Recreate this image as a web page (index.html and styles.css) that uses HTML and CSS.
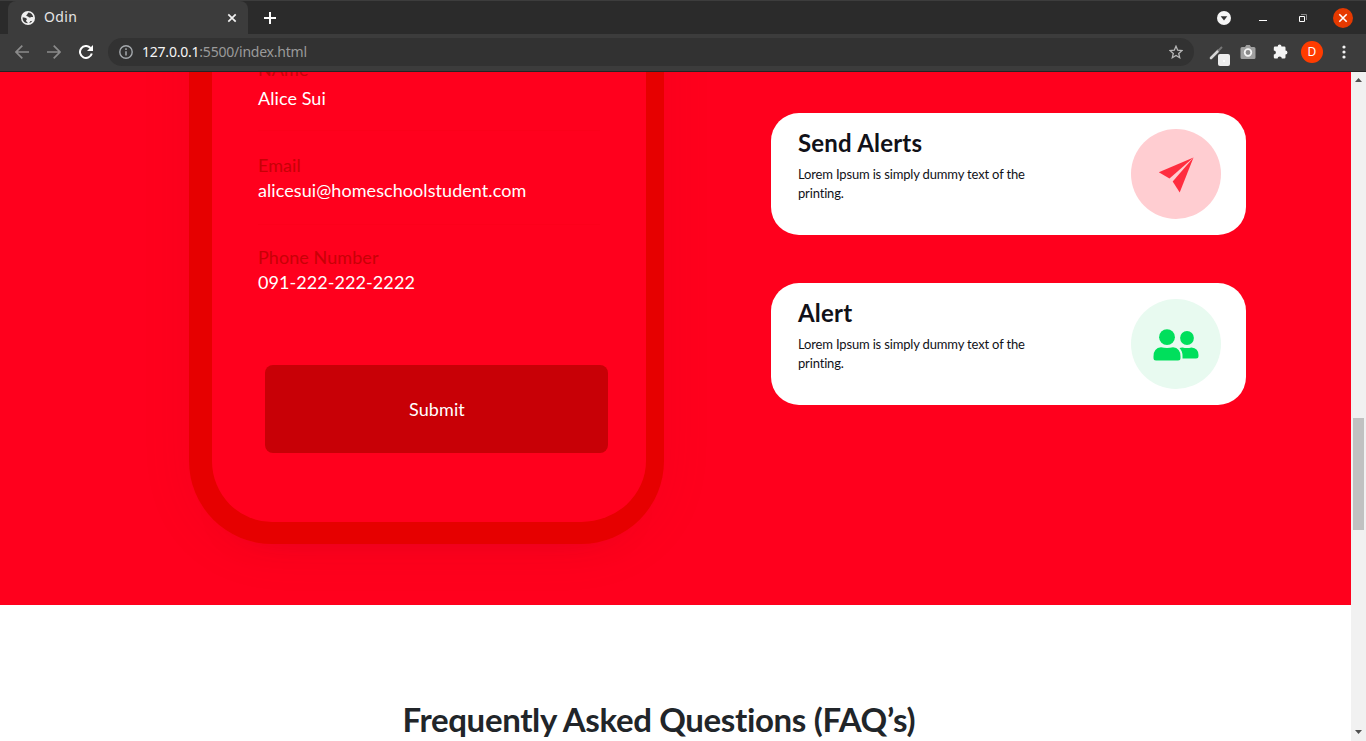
FILE: index.html
```html
<!DOCTYPE html>
<html lang="en">
<head>
<meta charset="utf-8">
<title>Odin</title>
<link rel="stylesheet" href="styles.css">
</head>
<body>
<div class="browser">
  <header class="tabstrip">
    <div class="tab">
      <svg class="globe" width="14" height="14" viewBox="0 0 14 14"><circle cx="7" cy="7" r="7" fill="#f1f1f1"/><path d="M7.6 1.6c-1.2.6-.8 1.8-1.8 2.2-.9.4-.4 1.5.3 1.5 1.500 0 1.200 1.100 2.300 1.300 1.200.2 1.900-.9 3.800-.3-.3-2.400-2-4.300-4.600-4.700z" fill="#3c3c3c"/><path d="M1.700 6.300c1.300.7 3.900.3 4.200 1.700.2 1-1.100 1-.9 2 .2.800 1.600.600 1.600 2.300-3.100 0-5.500-2.800-4.900-6zM8.300 12.100c.1-1.100 1-1.100 1.100-2.100 1 .1 1.300-.3 1.900-.3-.6 1.200-1.800 2.100-3 2.400z" fill="#3c3c3c"/></svg>
      <span class="tab-title">Odin</span>
      <svg width="10" height="10" viewBox="0 0 10 10"><path d="M1.300 1.300l7.400 7.400M8.700 1.300L1.300 8.700" stroke="#f2f2f2" stroke-width="1.700"/></svg>
    </div>
    <svg class="new-tab" width="12" height="12" viewBox="0 0 12 12"><path d="M6 0v12M0 6h12" stroke="#fff" stroke-width="2"/></svg>
    <div class="window-controls">
      <svg width="14" height="14" viewBox="0 0 14 14"><circle cx="7" cy="7" r="7" fill="#f5f5f5"/><path d="M3.700 5.200h6.600L7 9.500z" fill="#303030"/></svg>
      <svg width="8" height="14" viewBox="0 0 8 14"><path d="M0 9.500h8" stroke="#fff"/></svg>
      <svg width="8" height="8" viewBox="0 0 8 8" fill="none"><path d="M2 .5h5.500V6" stroke="#888"/><path d="M.5 2.500h5v5h-5z" stroke="#fff"/></svg>
      <svg width="20" height="20" viewBox="0 0 20 20"><circle cx="10" cy="10" r="10" fill="#e63900"/><path d="M6.300 6.300l7.400 7.400M13.700 6.300l-7.400 7.400" stroke="#fff" stroke-width="1.600"/></svg>
    </div>
  </header>
  <div class="toolbar">
    <svg width="14" height="14" viewBox="0 0 14 14" fill="none" stroke="#8b8b8b" stroke-width="1.700"><path d="M14 7H1.500M7.300.7L1 7l6.300 6.300"/></svg>
    <svg class="forward" width="14" height="14" viewBox="0 0 14 14" fill="none" stroke="#8b8b8b" stroke-width="1.700"><path d="M0 7h12.500M6.700.7L13 7l-6.300 6.300"/></svg>
    <svg class="reload" width="14" height="14" viewBox="0 0 14 14" fill="none"><path d="M12.800 8.500A6 6 0 1 1 11.500 3" stroke="#fff" stroke-width="2"/><path d="M14 0v6H8z" fill="#fff"/></svg>
    <div class="address">
      <svg width="14" height="14" viewBox="0 0 14 14" fill="none"><circle cx="7" cy="7" r="6.200" stroke="#a5a9ad" stroke-width="1.400"/><path d="M7 6.200v4.300M7 3.300v1.600" stroke="#a5a9ad" stroke-width="1.500"/></svg>
      <span class="url"><span class="host">127.0.0.1</span>:5500/index.html</span>
      <svg class="star" width="14" height="14" viewBox="0 0 14 14"><path d="M7 1.200l1.700 4 4.300.4-3.300 2.900 1 4.200L7 10.500l-3.700 2.200 1-4.200L1 5.600l4.300-.4z" fill="none" stroke="#b8b8b8" stroke-width="1.300"/></svg>
    </div>
    <div class="extensions">
      <svg width="22" height="22" viewBox="0 0 22 22"><path d="M2 14l7-7" stroke="#d6d6d6" stroke-width="2.600" stroke-linecap="round"/><path d="M9 7l4-4" stroke="#777" stroke-width="2"/><rect x="9" y="10" width="12" height="12" rx="2" fill="#ececec"/><circle cx="15" cy="17" r="1" fill="#fff"/></svg>
      <svg class="camera" width="16" height="14" viewBox="0 0 16 14"><path d="M2 2h3l1.300-2h3.500L11 2h3q1.500 0 1.500 1.500v9Q15.500 14 14 14H2Q.5 14 .5 12.500v-9Q.5 2 2 2z" fill="#a0a0a0"/><circle cx="8" cy="7.500" r="3.300" fill="#8a8a8a" stroke="#f5f5f5" stroke-width="1.800"/></svg>
      <svg class="puzzle" width="15" height="15" viewBox="0 0 15 15"><path d="M2 2.500h2.700a1.900 1.900 0 0 1 3.800 0h2.800q1.200 0 1.200 1.200v2.800a1.950 1.950 0 0 1 0 3.900v2.900q0 1.200-1.200 1.200H8.800a2.100 2.100 0 0 0-4.200 0H2q-1.200 0-1.200-1.200v-2.700a2.100 2.100 0 0 0 0-4.200V3.700Q.8 2.500 2 2.500z" fill="#f5f5f5"/></svg>
      <span class="avatar">D</span>
      <svg class="more" width="4" height="14" viewBox="0 0 4 14" fill="#f2f2f2"><circle cx="2" cy="2" r="1.600"/><circle cx="2" cy="7" r="1.600"/><circle cx="2" cy="12" r="1.600"/></svg>
    </div>
  </div>
  <div class="viewport">
    <main class="page">
      <section class="contact">
        <form class="phone">
          <div class="field field-name"><span class="label">NAme</span><span class="value">Alice Sui</span></div>
          <div class="field"><span class="label">Email</span><span class="value">alicesui@homeschoolstudent.com</span></div>
          <div class="field field-last"><span class="label">Phone Number</span><span class="value">091-222-222-2222</span></div>
          <button class="submit" type="button">Submit</button>
        </form>
        <div class="cards">
          <article class="card">
            <div><h3>Send Alerts</h3><p>Lorem Ipsum is simply dummy text of the printing.</p></div>
            <span class="badge badge-send"><svg width="36" height="36" viewBox="0 0 36 36" fill="#ff2d3f"><path d="M35.500.500L.800 15.200 11.500 21.600z"/><path d="M35.500.500L14.700 24.500 21.700 35.600z"/></svg></span>
          </article>
          <article class="card">
            <div><h3>Alert</h3><p>Lorem Ipsum is simply dummy text of the printing.</p></div>
            <span class="badge badge-people"><svg width="46" height="32" viewBox="0 0 46 32" fill="#00df5c"><circle cx="14" cy="8.200" r="7.900"/><circle cx="34" cy="9" r="6.900"/><path d="M8 18.300q6 1.500 12 0 7.500.7 7.500 9.200v1.500q0 2.500-2.500 2.500H3Q.500 31.500.500 29v-1.500q0-8.500 7.500-9.200z"/><path d="M26.500 19q1.500-.7 3-.6 4.500 1.400 9 0Q45.500 19 45.500 26v1q0 2.500-2.500 2.500H29.500v-2.500q0-5-3-8z"/></svg></span>
          </article>
        </div>
      </section>
      <section class="faq"><h2>Frequently Asked Questions (FAQ’s)</h2></section>
    </main>
    <aside class="scrollbar">
      <svg width="7" height="4" viewBox="0 0 7 4"><path d="M0 4L3.500 0 7 4z" fill="#505050"/></svg>
      <div class="thumb"></div>
      <svg class="down" width="7" height="4" viewBox="0 0 7 4"><path d="M0 0l3.500 4L7 0z" fill="#505050"/></svg>
    </aside>
  </div>
</div>
</body>
</html>
```
FILE: styles.css
```css
* { box-sizing: border-box; }
body { margin: 0; overflow: hidden; font-family: Lato, sans-serif; }
svg { display: block; flex: none; }
h2, h3, p { margin: 0; }
.browser { width: 1366px; height: 741px; display: flex; flex-direction: column; overflow: hidden; }

.tabstrip { height: 34px; flex: none; display: flex; align-items: center; background: #2b2b2b; border-top: 1px solid #3d3d3d; padding-left: 8px; font-family: "Noto Sans", sans-serif; }
.tab { width: 240px; height: 33px; background: #3c3c3c; border-radius: 8px 8px 0 0; display: flex; align-items: center; padding: 0 11px 0 13px; }
.tab-title { flex: 1; margin: -2px 0 0 9px; font-size: 14px; line-height: 20px; color: #e6e6e6; letter-spacing: .4px; }
.new-tab { margin-left: 16px; }
.window-controls { margin-left: auto; padding-right: 13px; display: flex; align-items: center; }
.window-controls svg:nth-child(2) { margin-left: 28px; }
.window-controls svg:nth-child(3) { margin-left: 32px; }
.window-controls svg:nth-child(4) { margin-left: 26px; }

.toolbar { height: 38px; flex: none; display: flex; align-items: center; background: #3c3c3c; border-bottom: 1px solid #242424; padding: 0 19px 1px 15px; font-family: "Noto Sans", sans-serif; }
.forward { margin-left: 18px; }
.reload { margin-left: 18px; }
.address { width: 1086px; height: 28px; margin-left: 15px; border-radius: 14px; background: #323232; display: flex; align-items: center; padding: 0 11px; }
.url { flex: 1; margin-left: 9px; font-size: 14px; line-height: 20px; color: #9a9a9a; letter-spacing: -.22px; }
.host { color: #f5f5f5; }
.extensions { display: flex; align-items: center; margin-left: 15px; }
.extensions > svg:first-child { margin-top: 6px; }
.camera { margin-left: 9px; }
.puzzle { margin: -2px 0 0 17px; }
.avatar { width: 22px; height: 22px; margin-left: 13px; border-radius: 50%; background: #ff3c00; color: #fff; font-size: 12px; line-height: 22px; text-align: center; }
.more { margin-left: 19px; }

.viewport { flex: 1; min-height: 0; display: flex; }
.page { width: 1351px; height: 669px; overflow: hidden; background: #fff; }
.contact { height: 533px; background: #ff001d; display: flex; align-items: flex-start; overflow: hidden; }
.phone { width: 475px; height: 672px; margin: -200px 0 0 189px; padding: 185px 38px 0 46px; border: 22px solid #e60000; border-width: 0 18px 22px 23px; border-radius: 83px; display: flex; flex-direction: column; box-shadow: 0 4px 56px rgba(140, 0, 30, .07), 0 34px 44px -60px rgba(90, 0, 40, .6); font-size: 18px; line-height: 25px; letter-spacing: .07px; }
.field { width: 342px; height: 94px; flex: none; display: flex; flex-direction: column; border-bottom: 1px solid #fc001a; padding-top: 22px; }
.field-name { height: 74px; padding: 0; gap: 4px; }
.field-last { height: 92px; padding-top: 20px; border: 0; }
.label { color: #c80006; }
.value { color: #fff; }
.submit { flex: none; width: 343px; height: 88px; margin: 48px 0 0 7px; border: 0; border-radius: 8px; background: #c80006; color: #fff; font: 18px Lato, sans-serif; letter-spacing: .1px; padding: 0 0 0 1px; }
.cards { width: 475px; margin: 41px 0 0 107px; display: flex; flex-direction: column; gap: 48px; }
.card { height: 122px; border-radius: 28px; background: #fff; display: flex; justify-content: space-between; padding: 16px 25px 0 27px; color: #111118; }
.card h3 { font-size: 24px; line-height: 28px; font-weight: 700; letter-spacing: .2px; }
.card p { width: 240px; margin-top: 8px; font-size: 13px; line-height: 19px; letter-spacing: -.165px; }
.badge { width: 90px; height: 90px; border-radius: 50%; display: flex; align-items: center; justify-content: center; padding-top: 2px; }
.badge-send { background: #ffcdd1; }
.badge-people { background: #e8faf0; }
.faq { padding: 94px 0 0 402.500px; }
.faq h2 { font-size: 33px; line-height: 40px; font-weight: 700; color: #212529; white-space: nowrap; letter-spacing: -.35px; }

.scrollbar { width: 15px; background: #f1f1f1; display: flex; flex-direction: column; align-items: center; padding: 6px 0 7px; }
.thumb { width: 11px; height: 112px; margin-top: 336px; background: #c1c1c1; }
.down { margin-top: auto; }
```
